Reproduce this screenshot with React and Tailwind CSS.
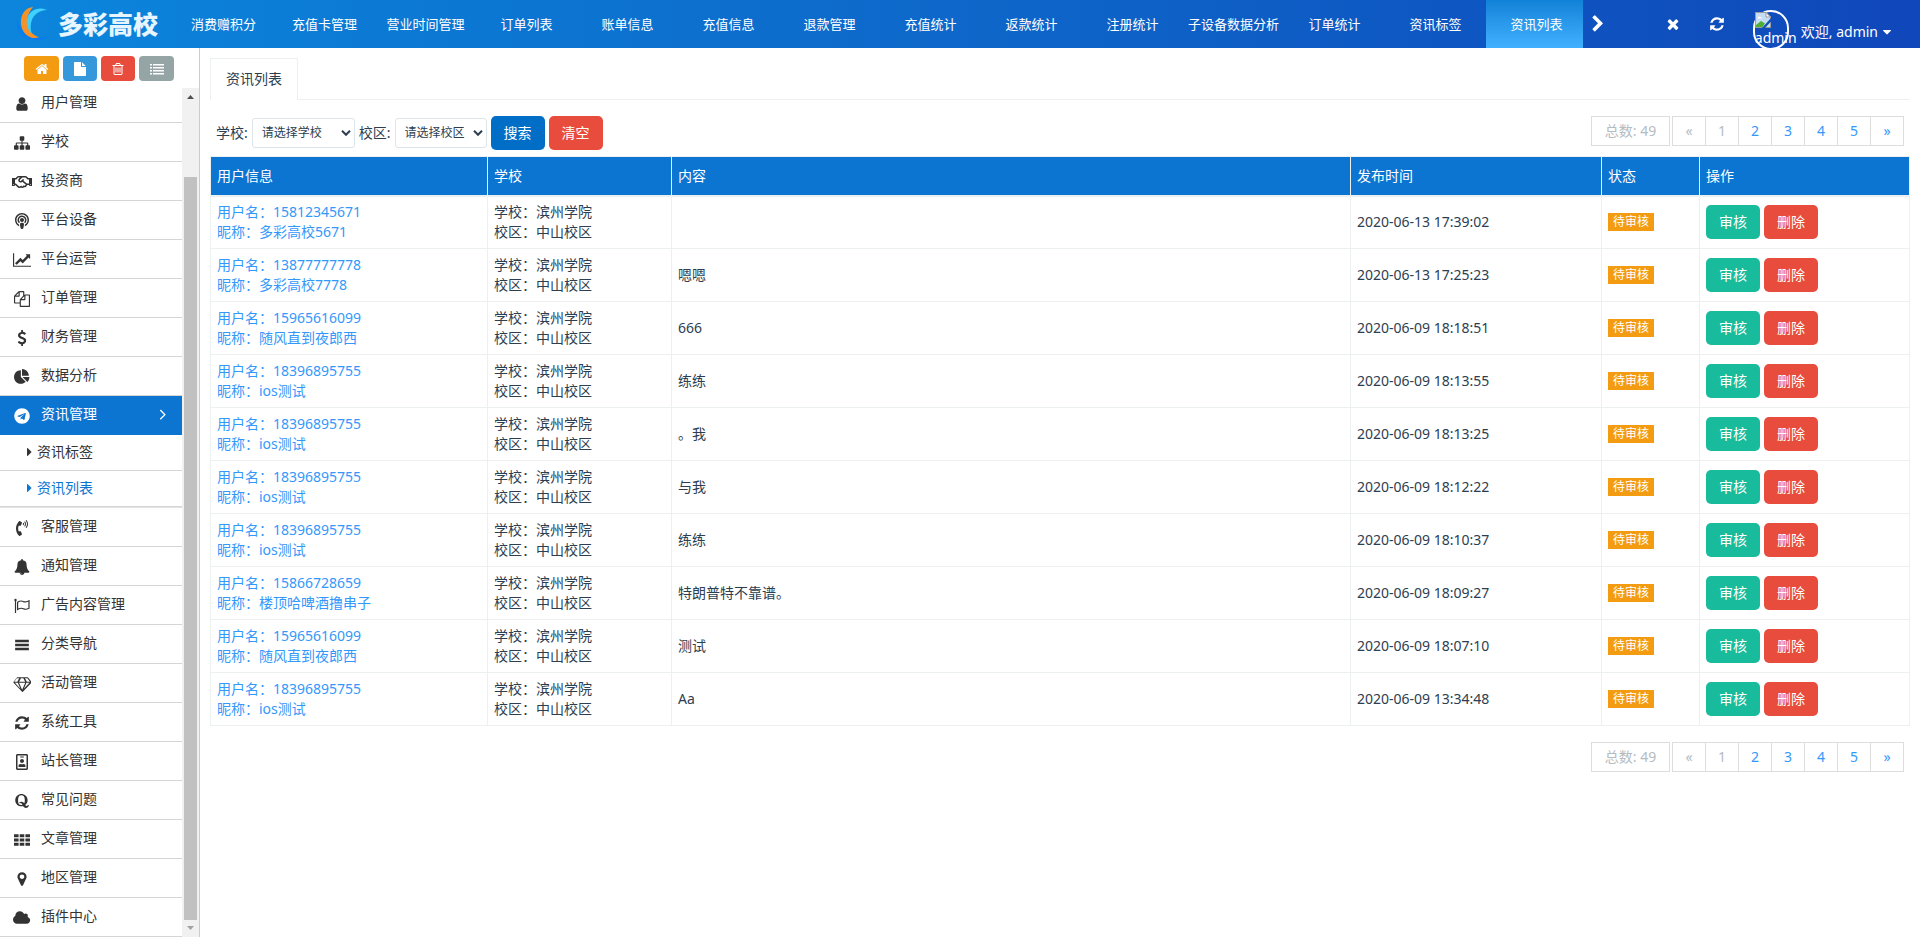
import { useState } from "react";
import clsx from "clsx";
import {
  FaRegHandshake,
  FaPodcast,
  FaTelegram,
  FaPhoneVolume,
  FaRegIdBadge,
  FaQuora,
} from "react-icons/fa";

// classic icon set, drawn on a 1792 unit grid
const PATHS = {
  home: "M1472 992v480q0 26-19 45t-45 19h-384v-384h-256v384h-384q-26 0-45-19t-19-45v-480q0-1 .5-3t.5-3l575-474 575 474q1 2 1 6zm223-69l-62 74q-8 9-21 11h-3q-13 0-21-7l-692-577-692 577q-12 8-24 7-13-2-21-11l-62-74q-8-10-7-23.5t11-21.5l719-599q32-26 76-26t76 26l244 204v-195q0-14 9-23t23-9h192q14 0 23 9t9 23v408l219 182q10 8 11 21.5t-7 23.5z",
  file: "M1152 512v-472q22 14 36 28l408 408q14 14 28 36h-472zm-128 32q0 40 28 68t68 28h544v1056q0 40-28 68t-68 28h-1344q-40 0-68-28t-28-68v-1600q0-40 28-68t68-28h800v544z",
  trash:
    "M704 736v576q0 14-9 23t-23 9h-64q-14 0-23-9t-9-23v-576q0-14 9-23t23-9h64q14 0 23 9t9 23zm256 0v576q0 14-9 23t-23 9h-64q-14 0-23-9t-9-23v-576q0-14 9-23t23-9h64q14 0 23 9t9 23zm256 0v576q0 14-9 23t-23 9h-64q-14 0-23-9t-9-23v-576q0-14 9-23t23-9h64q14 0 23 9t9 23zm128 724v-948h-896v948q0 22 7 40.5t14.5 27 10.5 8.5h832q3 0 10.5-8.5t14.5-27 7-40.5zm-672-1076h448l-48-117q-7-9-17-11h-317q-10 2-17 11zm928 32v64q0 14-9 23t-23 9h-96v948q0 83-47 143.5t-113 60.5h-832q-66 0-113-58.5t-47-141.5v-952h-96q-14 0-23-9t-9-23v-64q0-14 9-23t23-9h309l70-167q15-37 54-63t79-26h320q40 0 79 26t54 63l70 167h309q14 0 23 9t9 23z",
  list: "M0 256h256v192H0zM384 256h1408v192H384zM0 640h256v192H0zM384 640h1408v192H384zM0 1024h256v192H0zM384 1024h1408v192H384zM0 1408h256v192H0zM384 1408h1408v192H384z",
  user: "M1536 1399q0 109-62.5 187t-150.5 78h-854q-88 0-150.5-78t-62.5-187q0-85 8.5-160.5t31.5-152 58.5-131 94-89 134.5-34.5q131 128 313 128t313-128q76 0 134.5 34.5t94 89 58.5 131 31.5 152 8.500 160.500zm-256-887q0 159-112.5 271.5t-271.5 112.5-271.5-112.5-112.5-271.5 112.5-271.5 271.5-112.5 271.5 112.5 112.5 271.5z",
  sitemap:
    "M1792 1248v320q0 40-28 68t-68 28h-320q-40 0-68-28t-28-68v-320q0-40 28-68t68-28h96v-192h-512v192h96q40 0 68 28t28 68v320q0 40-28 68t-68 28h-320q-40 0-68-28t-28-68v-320q0-40 28-68t68-28h96v-192h-512v192h96q40 0 68 28t28 68v320q0 40-28 68t-68 28h-320q-40 0-68-28t-28-68v-320q0-40 28-68t68-28h96v-192q0-52 38-90t90-38h512v-192h-96q-40 0-68-28t-28-68v-320q0-40 28-68t68-28h320q40 0 68 28t28 68v320q0 40-28 68t-68 28h-96v192h512q52 0 90 38t38 90v192h96q40 0 68 28t28 68z",
  chart:
    "M2048 1536v128h-2048v-1536h128v1408h1920zm-128-1248v435q0 21-19.5 29.5t-35.5-7.5l-121-121-633 633q-10 10-23 10t-23-10l-233-233-416 416-192-192 585-585q10-10 23-10t23 10l233 233 464-464-121-121q-16-16-7.5-35.5t29.5-19.5h435q14 0 23 9t9 23z",
  files:
    "M1696 384q40 0 68 28t28 68v1216q0 40-28 68t-68 28h-960q-40 0-68-28t-28-68v-288h-544q-40 0-68-28t-28-68v-672q0-40 20-88t48-76l408-408q28-28 76-48t88-20h416q40 0 68 28t28 68v328q68-40 128-40h416zm-544 213l-299 299h299v-299zm-640-384l-299 299h299v-299zm196 647l316-316v-416h-384v416q0 40-28 68t-68 28h-416v640h512v-256q0-40 20-88t48-76zm956 804v-1152h-384v416q0 40-28 68t-68 28h-416v640h896z",
  dollar:
    "M1362 1185q0 153-99.5 263.5t-258.5 136.5v175q0 14-9 23t-23 9h-135q-13 0-22.5-9.5t-9.5-22.5v-175q-66-9-127.5-31t-101.5-44.5-74-48-46.5-37.5-17.5-18q-17-21-2-41l103-135q7-10 23-12 15-2 24 9l2 2q113 99 243 125 37 8 74 8 81 0 142.5-43t61.5-122q0-28-15-53t-33.5-42-58.5-37.5-66-32-80-32.5q-39-16-61.5-25t-61.5-26.5-62.5-31-56.5-35.5-53.5-42.5-43.5-49-35.5-58-21-66.5-8.5-78q0-138 98-242t255-134v-180q0-13 9.5-22.5t22.5-9.5h135q14 0 23 9t9 23v176q57 6 110.5 23t87 33.5 63.5 37.5 39 29 15 14q17 18 5 38l-81 146q-8 15-23 16-14 3-27-7-3-3-14.5-12t-39-26.5-58.5-32-74.5-26-85.5-11.5q-95 0-155 43t-60 111q0 26 8.5 48t29.5 41.5 39.5 33 56 31 60.5 27 70 27.5q53 20 81 31.5t76 35 75.5 42.5 62 50 53 63.5 31.5 76.5 13 94z",
  pie: "M768 890l546 546q-106 108-247.5 168t-298.5 60q-209 0-385.5-103t-279.5-279.5-103-385.5 103-385.5 279.5-279.5 385.5-103v762zm187 6h773q0 157-60 298.5t-168 247.5zm709-128h-768v-768q209 0 385.5 103t279.5 279.5 103 385.5z",
  bell: "M912 1696q0-16-16-16-59 0-101.5-42.5t-42.5-101.5q0-16-16-16t-16 16q0 73 51.5 124.5t124.5 51.5q16 0 16-16zm816-288q0 52-38 90t-90 38h-448q0 106-75 181t-181 75-181-75-75-181h-448q-52 0-90-38t-38-90q50-42 91-88t85-119.5 74.5-158.5 50-206 19.5-260q0-152 117-282.5t307-158.5q-8-19-8-39 0-40 28-68t68-28 68 28 28 68q0 20-8 39 190 28 307 158.5t117 282.5q0 139 19.5 260t50 206 74.5 158.5 85 119.5 91 88z",
  bars: "M128 320h1536v256H128zM128 768h1536v256H128zM128 1216h1536v256H128z",
  diamond:
    "M212 768l623 665-300-665h-323zm812 772l349-772h-698zm-538-900l204-384h-262l-288 384h346zm727 793l623-665h-323zm-526-793h674l-204-384h-266zm863 0h346l-288-384h-262zm141-486l384 512q14 18 13 41.5t-17 40.5l-960 1024q-18 20-47 20t-47-20l-960-1024q-16-17-17-40.5t13-41.5l384-512q18-26 51-26h1152q33 0 51 26z",
  refresh:
    "M1639 1056q0 5-1 7-64 268-268 434.5t-478 166.5q-146 0-282.5-55t-243.5-157l-129 129q-19 19-45 19t-45-19-19-45v-448q0-26 19-45t45-19h448q26 0 45 19t19 45-19 45l-137 137q71 66 161 102t187 36q134 0 250-65t186-179q11-17 53-117 8-23 30-23h192q13 0 22.5 9.5t9.5 22.5zm25-800v448q0 26-19 45t-45 19h-448q-26 0-45-19t-19-45 19-45l138-138q-148-137-349-137-134 0-250 65t-186 179q-11 17-53 117-8 23-30 23h-199q-13 0-22.5-9.5t-9.5-22.5v-7q65-268 270-434.5t480-166.5q146 0 284 55.5t245 156.5l130-129q19-19 45-19t45 19 19 45z",
  grid: "M0 256h512v320H0zM640 256h512v320H640zM1280 256h512v320h-512zM0 736h512v320H0zM640 736h512v320H640zM1280 736h512v320h-512zM0 1216h512v320H0zM640 1216h512v320H640zM1280 1216h512v320h-512z",
  marker:
    "M1152 640q0-106-75-181t-181-75-181 75-75 181 75 181 181 75 181-75 75-181zm256 0q0 109-33 179l-364 774q-16 33-47.5 52t-67.5 19-67.5-19-46.5-52l-365-774q-33-70-33-179 0-212 150-362t362-150 362 150 150 362z",
  cloud:
    "M1920 1152q0 159-112.5 271.5t-271.5 112.5h-1088q-185 0-316.5-131.5t-131.5-316.5q0-132 71-241.5t187-163.5q-2-28-2-43 0-212 150-362t362-150q158 0 286.5 88t187.5 230q70-62 166-62 106 0 181 75t75 181q0 75-41 138 129 30 213 134.5t84 239.5z",
  times:
    "M1490 1322q0 40-28 68l-136 136q-28 28-68 28t-68-28l-294-294-294 294q-28 28-68 28t-68-28l-136-136q-28-28-28-68t28-68l294-294-294-294q-28-28-28-68t28-68l136-136q28-28 68-28t68 28l294 294 294-294q28-28 68-28t68 28l136 136q28 28 28 68t-28 68l-294 294 294 294q28 28 28 68z",
  chevron:
    "M1363 877l-742 742q-19 19-45 19t-45-19l-166-166q-19-19-19-45t19-45l531-531-531-531q-19-19-19-45t19-45l166-166q19-19 45-19t45 19l742 742q19 19 19 45t-19 45z",
  angle:
    "M1171 960q0 13-10 23l-466 466q-10 10-23 10t-23-10l-50-50q-10-10-10-23t10-23l393-393-393-393q-10-10-10-23t10-23l50-50q10-10 23-10t23 10l466 466q10 10 10 23z",
  caretRight:
    "M1152 896q0 26-19 45l-448 448q-19 19-45 19t-45-19-19-45v-896q0-26 19-45t45-19 45 19l448 448q19 19 19 45z",
  caretDown:
    "M1408 704q0 26-19 45l-448 448q-19 19-45 19t-45-19l-448-448q-19-19-19-45t19-45 45-19h896q26 0 45 19t19 45z",
};

const Icon = ({ name, width = 1792, className = "h-4" }) => (
  <svg
    viewBox={`0 0 ${width} 1792`}
    fill="currentColor"
    className={className}
    aria-hidden="true"
  >
    <path d={PATHS[name]} />
  </svg>
);

const FlagIcon = () => (
  <svg viewBox="0 0 16 16" className="h-4 w-4" fill="none" stroke="currentColor">
    <path d="M1.5 2v13" strokeWidth="1.2" />
    <circle cx="1.5" cy="2" r="1.2" fill="currentColor" stroke="none" />
    <path
      d="M3.6 4.2C6 2.6 7.6 2.6 9.4 3.6C11.3 4.6 13 3.7 15 2.8V10.2C13 11.3 11.4 11.8 9.4 10.7C7.6 9.8 6 10.1 3.6 11.5Z"
      strokeWidth="1.2"
    />
  </svg>
);

const topTabs = [
  "消费赠积分",
  "充值卡管理",
  "营业时间管理",
  "订单列表",
  "账单信息",
  "充值信息",
  "退款管理",
  "充值统计",
  "返款统计",
  "注册统计",
  "子设备数据分析",
  "订单统计",
  "资讯标签",
  "资讯列表",
];

const shortcuts = [
  { icon: "home", label: "首页", color: "bg-[#f39c12]", size: "w-[35px]" },
  { icon: "file", label: "文件", color: "bg-[#3498db]", size: "w-[34px]" },
  { icon: "trash", label: "清除缓存", color: "bg-[#e74c3c]", size: "w-[34px]" },
  { icon: "list", label: "列表", color: "bg-[#95a5a6]", size: "w-[35px]" },
];

const menu = [
  { name: "用户管理", icon: <Icon name="user" /> },
  { name: "学校", icon: <Icon name="sitemap" /> },
  { name: "投资商", icon: <FaRegHandshake className="h-5 w-5" /> },
  { name: "平台设备", icon: <FaPodcast className="h-4 w-4" /> },
  { name: "平台运营", icon: <Icon name="chart" width={2048} /> },
  { name: "订单管理", icon: <Icon name="files" /> },
  { name: "财务管理", icon: <Icon name="dollar" /> },
  { name: "数据分析", icon: <Icon name="pie" /> },
  {
    name: "资讯管理",
    icon: <FaTelegram className="h-4 w-4" />,
    children: ["资讯标签", "资讯列表"],
  },
  { name: "客服管理", icon: <FaPhoneVolume className="h-4 w-4" /> },
  { name: "通知管理", icon: <Icon name="bell" /> },
  { name: "广告内容管理", icon: <FlagIcon /> },
  { name: "分类导航", icon: <Icon name="bars" /> },
  { name: "活动管理", icon: <Icon name="diamond" width={2048} /> },
  { name: "系统工具", icon: <Icon name="refresh" /> },
  { name: "站长管理", icon: <FaRegIdBadge className="h-4 w-4" /> },
  { name: "常见问题", icon: <FaQuora className="h-4 w-4" /> },
  { name: "文章管理", icon: <Icon name="grid" /> },
  { name: "地区管理", icon: <Icon name="marker" /> },
  { name: "插件中心", icon: <Icon name="cloud" width={1920} /> },
];

const posts = [
  { phone: "15812345671", nick: "多彩高校5671", text: "", time: "2020-06-13 17:39:02" },
  { phone: "13877777778", nick: "多彩高校7778", text: "嗯嗯", time: "2020-06-13 17:25:23" },
  { phone: "15965616099", nick: "随风直到夜郎西", text: "666", time: "2020-06-09 18:18:51" },
  { phone: "18396895755", nick: "ios测试", text: "练练", time: "2020-06-09 18:13:55" },
  { phone: "18396895755", nick: "ios测试", text: "。我", time: "2020-06-09 18:13:25" },
  { phone: "18396895755", nick: "ios测试", text: "与我", time: "2020-06-09 18:12:22" },
  { phone: "18396895755", nick: "ios测试", text: "练练", time: "2020-06-09 18:10:37" },
  { phone: "15866728659", nick: "楼顶哈啤酒撸串子", text: "特朗普特不靠谱。", time: "2020-06-09 18:09:27" },
  { phone: "15965616099", nick: "随风直到夜郎西", text: "测试", time: "2020-06-09 18:07:10" },
  { phone: "18396895755", nick: "ios测试", text: "Aa", time: "2020-06-09 13:34:48" },
];

const columns = [
  { name: "用户信息", width: "w-[277px]" },
  { name: "学校", width: "w-[184px]" },
  { name: "内容", width: "" },
  { name: "发布时间", width: "w-[251px]" },
  { name: "状态", width: "w-[98px]" },
  { name: "操作", width: "w-[210px]" },
];

const Logo = () => (
  <a href="#home" className="flex h-full w-[173px] shrink-0 items-center pl-4">
    <svg viewBox="0 0 34 38" className="h-[38px] w-[34px]" fill="none">
      <path
        d="M1 14C-1 28 10 39 28 34C34 32 34 31 30 32C14 36 4 29 1 14Z"
        fill="#0a7cf0"
      />
      <path
        d="M17 2C3 3 1 24 12 31C15 33 19 34 23 32C10 28 7 14 17 2Z"
        fill="#f7922a"
      />
      <path
        d="M31 5C23 1 13 5 11 14C10 20 12 25 16 29C13 20 15 6 31 5Z"
        fill="#3fd0fb"
      />
    </svg>
    <span className="ml-2 text-[25px] leading-none font-black whitespace-nowrap text-[#e6f5ff]">
      多彩高校
    </span>
  </a>
);

const BrokenImage = () => (
  <svg viewBox="0 0 16 16" className="h-4 w-4">
    <path d="M.5.5h10.500l4.500 4.500v10.500h-15z" fill="#c5dcf5" stroke="#9b9b9b" />
    <path d="M11 .5v4.500h4.500z" fill="#fff" stroke="#9b9b9b" />
    <path d="M2.500 6c0-1.500 2-1.800 2.500-.8c1.500-.4 2 .8 1.300 1.300H3z" fill="#fff" />
    <path d="M1 15v-2l5-4l4 2.500L7.500 15z" fill="#4fae34" />
    <path d="M16 6L7 16h3l6-6.500z" fill="#1150bb" />
  </svg>
);

const Header = () => (
  <header className="flex h-12 shrink-0 items-center overflow-hidden bg-linear-to-r from-[#0c86dc] via-[#0e67ca] to-[#1047ba] text-white">
    <Logo />
    <nav className="flex h-full gap-1">
      {topTabs.map((tab) => (
        <a
          key={tab}
          href="#tab"
          className={clsx(
            "flex h-full w-[97px] items-center justify-center pl-1 text-[13px] whitespace-nowrap",
            tab === "资讯列表" && "bg-linear-to-b from-[#1082d8] to-[#41b1ff]"
          )}
        >
          {tab}
        </a>
      ))}
    </nav>
    <button aria-label="下一页" className="ml-1.5">
      <Icon name="chevron" className="h-[18px]" />
    </button>
    <div className="ml-auto flex shrink-0 items-center pr-[26px]">
      <button aria-label="关闭" className="mr-7">
        <Icon name="times" />
      </button>
      <button aria-label="刷新" className="mr-7">
        <Icon name="refresh" />
      </button>
      <button className="flex items-start gap-3 pt-3 text-sm leading-5">
        <span className="h-10 w-9 shrink-0 rounded-full border-2 border-white text-left whitespace-nowrap">
          <BrokenImage />
          <span className="block leading-5">admin</span>
        </span>
        <span className="flex items-center pt-3">
          欢迎, admin
          <Icon name="caretDown" className="ml-0.5 h-3.5" />
        </span>
      </button>
    </div>
  </header>
);

const Sidebar = () => {
  const [open, setOpen] = useState("资讯管理");

  return (
    <aside className="flex w-[200px] shrink-0 flex-col border-r border-[#ccc]">
      <div className="flex h-10 shrink-0 gap-1 pt-2 pl-6">
        {shortcuts.map((item) => (
          <button
            key={item.icon}
            aria-label={item.label}
            className={clsx(
              "flex h-[25px] items-center justify-center rounded text-white",
              item.size,
              item.color
            )}
          >
            <Icon name={item.icon} className="h-3.5" />
          </button>
        ))}
      </div>
      <div className="flex min-h-0 flex-1">
        <div className="min-w-0 flex-1 overflow-hidden">
          <ul className="-mt-1 text-sm text-[#333]">
            {menu.map((item) => {
              const active = item.children && open === item.name;
              return (
                <li key={item.name}>
                  <a
                    href="#menu"
                    onClick={() => setOpen(item.name)}
                    className={clsx(
                      "flex h-[39px] items-center border-b pb-0.5",
                      active
                        ? "border-[#0c75d2] bg-[#0c75d2] text-white"
                        : "border-[#d5d5d5]"
                    )}
                  >
                    <span className="ml-2.5 flex w-6 justify-center pt-1">
                      {item.icon}
                    </span>
                    <span className="ml-[7px]">{item.name}</span>
                    {active && (
                      <Icon name="angle" className="mr-2.5 ml-auto h-[18px]" />
                    )}
                  </a>
                  {active && (
                    <ul className="border-b border-[#e3e3e3]">
                      {item.children.map((child) => (
                        <li key={child}>
                          <a
                            href="#child"
                            className={clsx(
                              "flex h-9 items-center border-b border-[#d5d5d5] pb-0.5 pl-[22px]",
                              child === "资讯列表" && "text-[#0c75d2]"
                            )}
                          >
                            <Icon name="caretRight" className="h-3.5 w-[15px]" />
                            {child}
                          </a>
                        </li>
                      ))}
                    </ul>
                  )}
                </li>
              );
            })}
          </ul>
        </div>
        <div className="flex w-[17px] flex-col bg-[#f1f1f1] px-0.5">
          <svg viewBox="0 0 13 17" className="h-[17px] w-[13px]">
            <path d="M3 11h7l-3.500-4z" fill="#505050" />
          </svg>
          <div className="grow-[72]" />
          <div className="grow-[743] bg-[#c1c1c1]" />
          <svg viewBox="0 0 13 17" className="h-[17px] w-[13px]">
            <path d="M3 6h7l-3.500 4z" fill="#a3a3a3" />
          </svg>
        </div>
      </div>
    </aside>
  );
};

const Pagination = () => (
  <div className="flex gap-0.5 pr-1.5 text-sm text-[#b4bcc2]">
    <span className="flex h-[30px] w-[79px] items-center justify-center border border-[#ddd]">
      总数: 49
    </span>
    <ul className="flex border-l border-[#ddd]">
      {["«", "1", "2", "3", "4", "5", "»"].map((page, i) => (
        <li key={page}>
          <a
            href="#page"
            className={clsx(
              "flex h-[30px] w-[33px] items-center justify-center border-y border-r border-[#ddd]",
              i > 1 && "text-[#3498fb]"
            )}
          >
            {page}
          </a>
        </li>
      ))}
    </ul>
  </div>
);

const FilterSelect = ({ id, label, placeholder, width }) => (
  <>
    <label htmlFor={id}>{label}:</label>
    <div className="relative">
      <select
        id={id}
        className={clsx(
          "block h-[30px] appearance-none rounded-[3px] border border-[#dce4ec] bg-white pl-[9px] text-xs",
          width
        )}
      >
        <option>{placeholder}</option>
      </select>
      <svg
        viewBox="0 0 10 6"
        className="pointer-events-none absolute top-3 right-1 h-1.5 w-2.5"
        fill="none"
        stroke="currentColor"
        strokeWidth="2"
      >
        <path d="M1 .8l4 4l4-4" />
      </svg>
    </div>
  </>
);

const Button = ({ color, children }) => (
  <button
    className={clsx(
      "inline-flex h-[34px] w-[54px] items-center justify-center rounded-[5px] text-sm text-white",
      color
    )}
  >
    {children}
  </button>
);

const PostsTable = () => (
  <table className="w-full table-fixed border-collapse border border-[#ecf0f1] text-left">
    <thead>
      <tr className="h-[39px] bg-[#0c75d2] text-white">
        {columns.map((col) => (
          <th
            key={col.name}
            className={clsx(
              "border border-b-2 border-[#ecf0f1] px-1.5 font-normal",
              col.width
            )}
          >
            {col.name}
          </th>
        ))}
      </tr>
    </thead>
    <tbody>
      {posts.map((post) => (
        <tr key={post.time} className="h-[53px] *:border *:border-[#ecf0f1] *:px-1.5">
          <td>
            <a href="#user" className="block text-[#3498fb]">
              用户名：{post.phone}
              <br />
              昵称：{post.nick}
            </a>
          </td>
          <td>
            学校：滨州学院
            <br />
            校区：中山校区
          </td>
          <td>{post.text}</td>
          <td>{post.time}</td>
          <td>
            <span className="flex h-[18px] w-[46px] items-center justify-center bg-[#f39c12] text-xs text-white">
              待审核
            </span>
          </td>
          <td>
            <div className="flex gap-1">
              <Button color="bg-[#18bc9c]">审核</Button>
              <Button color="bg-[#e74c3c]">删除</Button>
            </div>
          </td>
        </tr>
      ))}
    </tbody>
  </table>
);

const App = () => {
  return (
    <div className="flex h-screen flex-col overflow-hidden bg-white font-['Noto_Sans','Noto_Sans_CJK_SC',sans-serif] text-sm text-[#2c3e50]">
      <Header />
      <div className="flex min-h-0 flex-1">
        <Sidebar />
        <main className="min-w-0 flex-1 overflow-hidden px-2.5 pt-2.5">
          <div className="flex border-b border-[#ecf0f1]">
            <a
              href="#list"
              className="-mb-px flex h-[42px] w-[88px] items-center justify-center border border-b-0 border-[#ecf0f1] bg-white pb-0.5"
            >
              资讯列表
            </a>
          </div>
          <div className="mt-4 flex items-start justify-between">
            <form
              className="flex h-[34px] items-center gap-1 pl-1.5"
              onSubmit={(e) => e.preventDefault()}
            >
              <FilterSelect
                id="school"
                label="学校"
                placeholder="请选择学校"
                width="w-[103px]"
              />
              <FilterSelect
                id="campus"
                label="校区"
                placeholder="请选择校区"
                width="w-[92px]"
              />
              <Button color="bg-[#006dc6]">搜索</Button>
              <Button color="bg-[#e74c3c]">清空</Button>
            </form>
            <Pagination />
          </div>
          <div className="mt-1.5 mb-4">
            <PostsTable />
          </div>
          <div className="flex justify-end">
            <Pagination />
          </div>
        </main>
      </div>
    </div>
  );
};

export default App;
